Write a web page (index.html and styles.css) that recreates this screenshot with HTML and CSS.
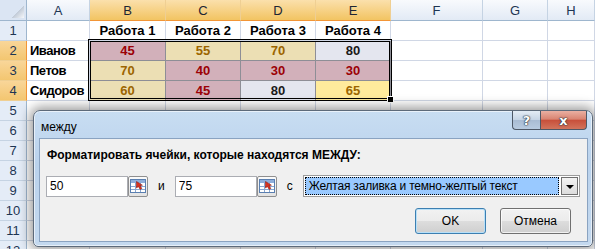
FILE: index.html
```
<!DOCTYPE html>
<html>
<head lang="ru">
    <meta charset="UTF-8">
    <title>между</title>
    <link rel="stylesheet" href="styles.css">
</head>
<body>
<div class="sheet">
    <div class="corner"></div>
    <div class="ch">A</div><div class="ch on">B</div><div class="ch on">C</div><div class="ch on">D</div><div class="ch on">E</div><div class="ch">F</div><div class="ch">G</div><div class="ch">H</div>

    <div class="rh">1</div><div></div><div class="b">Работа 1</div><div class="b">Работа 2</div><div class="b">Работа 3</div><div class="b">Работа 4</div><div></div><div></div><div></div>

    <div class="rh on">2</div><div class="name">Иванов</div><div class="v r">45</div><div class="v y">55</div><div class="v y">70</div><div class="v w">80</div><div></div><div></div><div></div>

    <div class="rh on">3</div><div class="name">Петов</div><div class="v y">70</div><div class="v r">40</div><div class="v r">30</div><div class="v r">30</div><div></div><div></div><div></div>

    <div class="rh on">4</div><div class="name">Сидоров</div><div class="v y">60</div><div class="v r">45</div><div class="v w">80</div><div class="v ya">65</div><div></div><div></div><div></div>

    <div class="rh">5</div><div></div><div></div><div></div><div></div><div></div><div></div><div></div><div></div>
    <div class="rh">6</div><div></div><div></div><div></div><div></div><div></div><div></div><div></div><div></div>
    <div class="rh">7</div><div></div><div></div><div></div><div></div><div></div><div></div><div></div><div></div>
    <div class="rh">8</div><div></div><div></div><div></div><div></div><div></div><div></div><div></div><div></div>
    <div class="rh">9</div><div></div><div></div><div></div><div></div><div></div><div></div><div></div><div></div>
    <div class="rh">10</div><div></div><div></div><div></div><div></div><div></div><div></div><div></div><div></div>
    <div class="rh">11</div><div></div><div></div><div></div><div></div><div></div><div></div><div></div><div></div>
    <div class="rh">12</div><div></div><div></div><div></div><div></div><div></div><div></div><div></div><div></div>

    <span class="sel"><span class="handle"></span></span>
</div>

<div class="dlg">
    <div class="titlebar">
        <span class="title">между</span>
        <span class="caps">
            <span class="cap help">?</span><span class="cap close">x</span>
        </span>
    </div>
    <div class="client">
        <div class="label">Форматировать ячейки, которые находятся МЕЖДУ:</div>
        <div class="fields">
            <div class="refedit">
                <input type="text" value="50">
                <span class="refbtn">
                    <svg width="16" height="14" viewBox="0 0 16 14">
                        <rect x="0.5" y="0.5" width="15" height="13" fill="#fff" stroke="#5a7fb0"/>
                        <rect x="1" y="1" width="14" height="3" fill="#8eaedb"/>
                        <path d="M1 7.5H15M1 10.5H15M5.5 4V13M10.5 4V13" stroke="#8aa6cf"/>
                        <path d="M6.5 2.5L6.5 9L8.4 7.6L10.2 10.4L11.8 9.4L10 6.6L12.4 6.2Z" fill="#d9301f" stroke="#8c1a10" stroke-width="0.6"/>
                    </svg>
                </span>
            </div>
            <span class="conj">и</span>
            <div class="refedit">
                <input type="text" value="75">
                <span class="refbtn">
                    <svg width="16" height="14" viewBox="0 0 16 14">
                        <rect x="0.5" y="0.5" width="15" height="13" fill="#fff" stroke="#5a7fb0"/>
                        <rect x="1" y="1" width="14" height="3" fill="#8eaedb"/>
                        <path d="M1 7.5H15M1 10.5H15M5.5 4V13M10.5 4V13" stroke="#8aa6cf"/>
                        <path d="M6.5 2.5L6.5 9L8.4 7.6L10.2 10.4L11.8 9.4L10 6.6L12.4 6.2Z" fill="#d9301f" stroke="#8c1a10" stroke-width="0.6"/>
                    </svg>
                </span>
            </div>
            <span class="conj">с</span>
            <div class="combo">
                <span class="val">Желтая заливка и темно-желтый текст</span>
                <span class="drop"></span>
            </div>
        </div>
        <div class="buttons">
            <button class="btn def">OK</button>
            <button class="btn">Отмена</button>
        </div>
    </div>
</div>
</body>
</html>
```

FILE: styles.css
```
html, body {
    margin: 0;
    width: 595px;
    height: 249px;
    overflow: hidden;
    background-color: #ffffff;
}

body {
    position: relative;
    font-family: "Liberation Sans", Arial, sans-serif;
    color: #000000;
}

/* spreadsheet */

.sheet {
    position: relative;
    display: grid;
    grid-template-columns: 27px 63px 76px 75px 75px 75px 92px 65px 47px;
    grid-template-rows: 21px repeat(12, 20px);
    font-size: 13px;
}

.sheet > div {
    box-sizing: border-box;
    border-right: 1px solid #d0d7e5;
    border-bottom: 1px solid #d0d7e5;
    display: flex;
    align-items: center;
    justify-content: center;
    white-space: nowrap;
}

.sheet > .corner {
    background: #dbe5f3;
    border-color: #9eb6ce;
    align-items: flex-end;
    justify-content: flex-end;
    padding: 0 2px 2px 0;
}

.corner::after {
    content: "";
    width: 12px;
    height: 12px;
    background: linear-gradient(135deg, transparent 50%, #c3ccd8 50%, #f6f8fb 100%);
}

.sheet > .ch {
    background: linear-gradient(#f8fafd, #e2eaf5);
    border-right-color: #c5d3e3;
    border-bottom-color: #9eb6ce;
    color: #1d3553;
}

.sheet > .ch.on {
    background: linear-gradient(#fbe0ac, #f2c462);
    border-right-color: #efcf93;
    border-bottom-color: #f29536;
    color: #1d2533;
}

.sheet > .rh {
    background: #e4ecf7;
    border-right-color: #9eb6ce;
    border-bottom-color: #c5d3e3;
    color: #1d3553;
}

.sheet > .rh.on {
    background: linear-gradient(#f9d699, #f3c670);
    border-right-color: #f29536;
    border-bottom-color: #efcf93;
}

.b, .name, .v {
    font-weight: bold;
}

.sheet > .name {
    justify-content: flex-start;
    padding-left: 3px;
    letter-spacing: -0.5px;
}

.sheet > .v {
    border-right-color: #8e8e96;
    border-bottom-color: #8e8e96;
}

.sheet > .r {
    background: #d2b0ba;
    color: #9c0006;
}

.sheet > .y {
    background: #ecdfb4;
    color: #9c6500;
}

.sheet > .w {
    background: #e4e6ef;
    color: #1a1a1a;
}

.sheet > .ya {
    background: #ffeb9c;
    color: #9c6500;
}

.sel {
    position: absolute;
    left: 88px;
    top: 39px;
    width: 304px;
    height: 62px;
    box-sizing: border-box;
    border: 3px double #000000;
}

.handle {
    position: absolute;
    right: -5px;
    bottom: -5px;
    width: 5px;
    height: 5px;
    background: #000000;
    border: 1px solid #ffffff;
}

/* dialog */

.dlg {
    position: absolute;
    left: 33px;
    top: 110px;
    width: 560px;
    height: 137px;
    box-sizing: border-box;
    display: flex;
    flex-direction: column;
    padding: 0 4px 4px 5px;
    border: 1px solid #5d6a7a;
    border-radius: 7px 7px 5px 5px;
    background: linear-gradient(#c8ddf2, #bad2ec 40%, #c4d9ef);
    box-shadow: 0 0 12px 3px rgba(0, 0, 0, 0.4), inset 0 0 0 1px rgba(255, 255, 255, 0.6);
    font-size: 12px;
}

.titlebar {
    height: 27px;
    display: flex;
    justify-content: space-between;
    align-items: flex-start;
}

.title {
    margin: 9px 0 0 2px;
}

.caps {
    display: flex;
    margin-right: 1px;
}

.cap {
    box-sizing: border-box;
    height: 19px;
    display: flex;
    align-items: center;
    justify-content: center;
    border: 1px solid #4e5866;
    border-top: none;
    font-family: "DejaVu Sans", sans-serif;
    font-weight: bold;
    color: #ffffff;
    text-shadow: 0 0 1px #1f2833, 0 0 1px #1f2833, 0 0 2px #39424e;
}

.help {
    width: 28px;
    border-right: none;
    border-radius: 0 0 0 4px;
    font-size: 13px;
    background: linear-gradient(#e4ecf5, #c5d4e5 50%, #a9bcd3 51%, #b8cbe0);
}

.close {
    width: 47px;
    border-radius: 0 0 4px 0;
    font-size: 13px;
    background: linear-gradient(#eab0a2, #d98472 45%, #c8503b 52%, #d2745c);
}

.client {
    flex: 1;
    display: flex;
    flex-direction: column;
    padding: 9px 7px 0 7px;
    background: #f0f0f0;
    border: 1px solid #8aa3c1;
}

.label {
    font-weight: bold;
    line-height: 14px;
}

.fields {
    display: flex;
    align-items: center;
    margin: 13px 0 0 -1px;
}

.refedit {
    display: flex;
}

.refedit input {
    box-sizing: border-box;
    width: 82px;
    height: 21px;
    margin: 0;
    padding: 0 3px;
    border: 1px solid #abadb3;
    background: #ffffff;
    font: 12px "Liberation Sans", Arial, sans-serif;
    color: #000000;
}

.refbtn {
    box-sizing: border-box;
    width: 20px;
    height: 21px;
    display: flex;
    align-items: center;
    justify-content: center;
    border: 1px solid #8f8f8f;
    border-radius: 2px;
    background: linear-gradient(#fbfbfb, #e2e2e2);
}

.conj {
    width: 27px;
    text-align: center;
}

.fields .conj:nth-of-type(2) {
    width: 26px;
}

.combo {
    box-sizing: border-box;
    width: 279px;
    height: 22px;
    display: flex;
    align-items: center;
    padding: 1px;
    border: 1px solid #9c9c9c;
    background: #ffffff;
}

.val {
    flex: 1;
    height: 18px;
    line-height: 16px;
    box-sizing: border-box;
    padding-left: 3px;
    margin-right: 2px;
    border: 1px dotted #000000;
    background: #99c9ff;
    white-space: nowrap;
    letter-spacing: -0.2px;
}

.drop {
    box-sizing: border-box;
    width: 17px;
    height: 18px;
    display: flex;
    align-items: center;
    justify-content: center;
    border: 1px solid #707070;
    background: linear-gradient(#f3f3f3, #dcdcdc);
}

.drop::after {
    content: "";
    border-left: 4px solid transparent;
    border-right: 4px solid transparent;
    border-top: 4px solid #000000;
    margin-top: 1px;
}

.buttons {
    display: flex;
    justify-content: flex-end;
    gap: 14px;
    margin: 11px 9px 0 0;
}

.btn {
    box-sizing: border-box;
    width: 71px;
    height: 26px;
    margin: 0;
    border: 1px solid #707070;
    border-radius: 3px;
    background: linear-gradient(#f2f2f2, #ebebeb 50%, #dddddd 51%, #cfcfcf);
    box-shadow: inset 0 0 0 1px rgba(255, 255, 255, 0.7);
    font: 12px "Liberation Sans", Arial, sans-serif;
    color: #000000;
}

.btn.def {
    border-color: #3c7fb1;
    box-shadow: inset 0 0 0 1px #b8e0f8;
}
```
